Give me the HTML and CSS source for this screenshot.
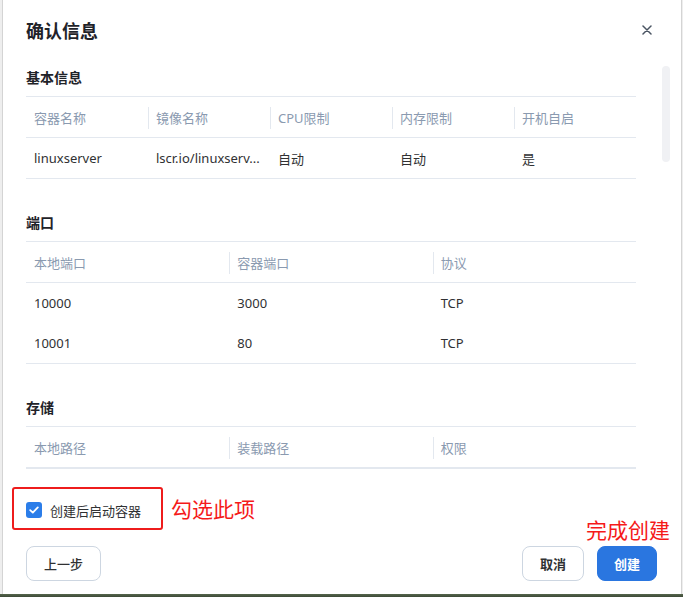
FILE: index.html
```
<!DOCTYPE html>
<html lang="zh-CN">
<head>
  <meta charset="UTF-8">
  <meta name="viewport" content="width=device-width, initial-scale=1.0">
  <title>确认信息</title>
  <link rel="stylesheet" href="styles.css">
</head>
<body>
  <div class="dialog">
    <div class="dialog-header">
      <h2 class="dialog-title">确认信息</h2>
      <button class="close-btn" aria-label="关闭">
        <svg width="10" height="10" viewBox="0 0 10 10"><path d="M1 1L9 9M9 1L1 9" stroke="#4b5563" stroke-width="1.5" stroke-linecap="round"/></svg>
      </button>
    </div>

    <div class="dialog-body">
      <div class="scroll-thumb"></div>

      <h3 class="section-title">基本信息</h3>
      <table class="info-table">
        <tr>
          <th>容器名称</th>
          <th><span class="sep"></span>镜像名称</th>
          <th><span class="sep"></span>CPU限制</th>
          <th><span class="sep"></span>内存限制</th>
          <th><span class="sep"></span>开机自启</th>
        </tr>
        <tr>
          <td>linuxserver</td>
          <td>lscr.io/linuxserv...</td>
          <td>自动</td>
          <td>自动</td>
          <td>是</td>
        </tr>
      </table>

      <h3 class="section-title">端口</h3>
      <table class="info-table">
        <tr>
          <th>本地端口</th>
          <th><span class="sep"></span>容器端口</th>
          <th><span class="sep"></span>协议</th>
        </tr>
        <tr><td>10000</td><td>3000</td><td>TCP</td></tr>
        <tr><td>10001</td><td>80</td><td>TCP</td></tr>
      </table>

      <h3 class="section-title">存储</h3>
      <table class="info-table">
        <tr>
          <th>本地路径</th>
          <th><span class="sep"></span>装载路径</th>
          <th><span class="sep"></span>权限</th>
        </tr>
      </table>
    </div>

    <div class="dialog-footer">
      <label class="check-row">
        <span class="checkbox">
          <svg width="10" height="8" viewBox="0 0 10 8"><path d="M1.2 4.2L3.8 6.6L8.8 1.4" fill="none" stroke="#fff" stroke-width="1.8" stroke-linecap="round" stroke-linejoin="round"/></svg>
        </span>
        创建后启动容器
      </label>

      <div class="actions">
        <button class="btn">上一步</button>
        <div class="actions-right">
          <button class="btn btn-bold">取消</button>
          <button class="btn btn-primary">创建</button>
        </div>
      </div>

      <div class="mark-box"></div>
      <div class="mark-text mark-check">勾选此项</div>
      <div class="mark-text mark-create">完成创建</div>
    </div>
  </div>
</body>
</html>
```

FILE: styles.css
```
* {
  box-sizing: border-box;
}

body {
  margin: 0;
  height: 597px;
  overflow: hidden;
  font-family: "Noto Sans", "Noto Sans CJK SC", sans-serif;
  background: linear-gradient(to bottom, #eeeeee 0, #eeeeee 594px, #55664c 594px, #3e4a38 597px);
}

.dialog {
  width: 680px;
  height: 594px;
  margin-left: 2px;
  background: #fff;
  border-left: 1px solid #d4d4d4;
  border-right: 1px solid #d4d4d4;
  display: flex;
  flex-direction: column;
}

.dialog-header {
  height: 62px;
  padding: 19px 29px 0 23px;
  display: flex;
  justify-content: space-between;
  align-items: flex-start;
}

.dialog-title {
  margin: 0;
  font-family: "Noto Sans CJK SC", sans-serif;
  font-size: 18px;
  line-height: 22px;
  font-weight: 700;
  color: #1f2329;
}

.close-btn {
  border: none;
  background: none;
  padding: 0;
  margin-top: 6px;
  width: 10px;
  height: 10px;
  display: flex;
}

.dialog-body {
  position: relative;
  height: 414px;
  overflow: hidden;
  padding: 5px 44px 0 23px;
}

.scroll-thumb {
  position: absolute;
  right: 11px;
  top: 4px;
  width: 8px;
  height: 96px;
  border-radius: 4px;
  background: #f0f1f4;
}

.section-title {
  margin: 0 0 9px;
  font-family: "Noto Sans CJK SC", sans-serif;
  font-size: 14px;
  line-height: 20px;
  font-weight: 700;
  color: #1f2329;
}

.info-table {
  width: 610px;
  border-collapse: separate;
  border-spacing: 0;
  table-layout: fixed;
  margin-bottom: 33px;
  font-size: 13px;
  border-top: 1px solid #e3e8ef;
  border-bottom: 1px solid #e3e8ef;
}

.info-table th,
.info-table td {
  box-sizing: content-box;
  height: 40px;
  padding: 0 8px;
  text-align: left;
  white-space: nowrap;
  overflow: hidden;
}

.info-table th {
  position: relative;
  font-weight: 400;
  color: #8a9ab0;
  border-bottom: 1px solid #e3e8ef;
}

.info-table td {
  color: #303133;
}

.sep {
  position: absolute;
  left: 0;
  top: 10px;
  height: 22px;
  border-left: 1px solid #e3e8ef;
}

.dialog-footer {
  position: relative;
  flex: 1;
  padding: 24px 24px 0 23px;
}

.check-row {
  display: flex;
  align-items: center;
  gap: 8px;
  height: 20px;
  font-size: 13px;
  color: #303133;
}

.checkbox {
  width: 16px;
  height: 16px;
  border-radius: 3px;
  background: #2b7de9;
  display: flex;
  align-items: center;
  justify-content: center;
}

.actions {
  margin-top: 26px;
  display: flex;
  justify-content: space-between;
}

.actions-right {
  display: flex;
  gap: 13px;
}

.btn {
  height: 35px;
  padding: 0 17px;
  border: 1px solid #cdd6e1;
  border-radius: 8px;
  background: #fff;
  font-family: "Noto Sans CJK SC", sans-serif;
  font-size: 13px;
  font-weight: 500;
  color: #303133;
}

.btn-bold {
  font-weight: 700;
}

.btn-primary {
  padding: 0 16px;
  border-color: #2a76e0;
  background: #2a76e0;
  color: #fff;
  font-weight: 700;
}

.mark-box {
  position: absolute;
  left: 9px;
  top: 11px;
  width: 151px;
  height: 43px;
  border: 2px solid #ee1c1c;
  border-radius: 3px;
}

.mark-text {
  position: absolute;
  font-family: "Noto Sans CJK SC", sans-serif;
  font-size: 21px;
  line-height: 24px;
  color: #f51a1a;
  white-space: nowrap;
}

.mark-check {
  left: 168px;
  top: 20px;
}

.mark-create {
  left: 583px;
  top: 41px;
}
```
